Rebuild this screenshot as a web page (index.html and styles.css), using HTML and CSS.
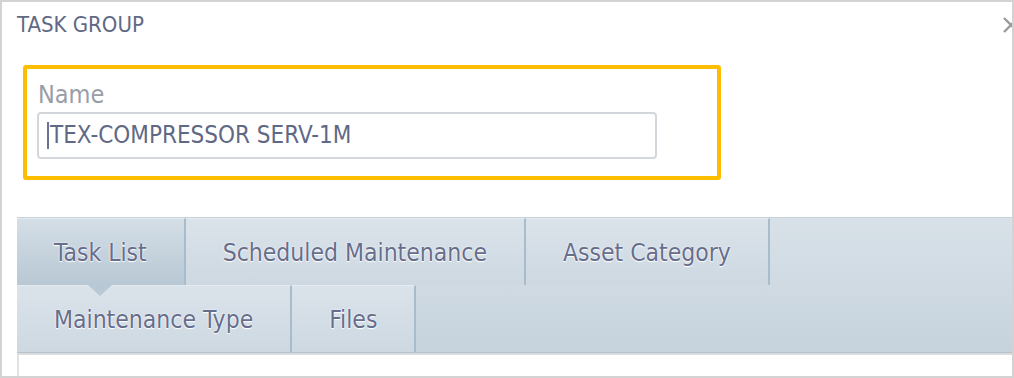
FILE: index.html
```html
<!DOCTYPE html>
<html lang="en">
<head>
    <meta charset="UTF-8">
    <title>Task Group</title>
    <link rel="stylesheet" href="styles.css">
</head>
<body>
    <div class="dialog">
        <div class="dialog-head">
            <h1>TASK GROUP</h1>
            <span class="close">
                <svg width="16" height="16" viewBox="0 0 16 16"><path d="M1 1 L15 15 M15 1 L1 15" stroke="#9b9b9b" stroke-width="2.4" fill="none"/></svg>
            </span>
        </div>

        <div class="name-box">
            <div class="label">Name</div>
            <div class="field"><span class="caret"></span>TEX-COMPRESSOR SERV-1M</div>
        </div>

        <div class="tabs">
            <div class="tab active">Task List</div>
            <div class="tab">Scheduled Maintenance</div>
            <div class="tab">Asset Category</div>
            <div class="tab">Maintenance Type</div>
            <div class="tab">Files</div>
        </div>
        <div class="tab-body"></div>
    </div>
</body>
</html>
```

FILE: styles.css
```css
html, body {
    margin: 0;
    padding: 0;
    background: #fff;
}
body {
    font-family: "DejaVu Sans Condensed", "DejaVu Sans", sans-serif;
}
.dialog {
    width: 1014px;
    height: 378px;
    box-sizing: border-box;
    border: 2px solid #d3d3d3;
    padding-left: 15px;
    overflow: hidden;
    display: flex;
    flex-direction: column;
}
.dialog-head {
    display: flex;
    justify-content: space-between;
    align-items: flex-start;
    padding-top: 10px;
}
h1 {
    margin: 0;
    font-size: 22px;
    line-height: 26px;
    font-weight: normal;
    color: #5f6984;
}
.close {
    display: block;
    width: 16px;
    height: 16px;
    margin-top: 5px;
    margin-right: -7px;
}
.close svg {
    display: block;
}
.name-box {
    margin: 27px 0 0 6px;
    padding: 12px 0 17px 10px;
    border: 4px solid #fdbd00;
    border-radius: 3px;
    width: 680px;
}
.label {
    font-size: 25px;
    line-height: 28px;
    color: #999ea6;
    padding-left: 1px;
}
.field {
    margin-top: 3px;
    width: 620px;
    height: 47px;
    box-sizing: border-box;
    border: 2px solid #d3d7dc;
    border-radius: 4px;
    padding-left: 8px;
    font-size: 24px;
    line-height: 43px;
    color: #5f6986;
    display: flex;
    align-items: center;
}
.caret {
    display: inline-block;
    width: 2px;
    height: 27px;
    background: #6a7390;
    margin-right: 1px;
}
.tabs {
    margin-top: 37px;
    display: flex;
    flex-wrap: wrap;
    background: linear-gradient(#d8e1e8, #c6d3dd);
    border-top: 1px solid #c7d2db;
    border-bottom: 1px solid #b3c3cf;
}
.tab {
    position: relative;
    height: 66px;
    line-height: 67px;
    padding: 0 37px;
    font-size: 24.5px;
    color: #676e8c;
    text-shadow: 0 0 2px #fff, 0 1px 1px #fff;
    background: linear-gradient(#dbe3ea, #cdd8e1);
    border-top: 1px solid #e4eaef;
    border-right: 2px solid #a9bccb;
}
.tab.active {
    background: linear-gradient(#d4dee6, #b8c8d4);
}
.tab.active::after {
    content: "";
    position: absolute;
    left: 50%;
    bottom: -11px;
    margin-left: -12px;
    border-left: 12px solid transparent;
    border-right: 12px solid transparent;
    border-top: 11px solid #b8c8d4;
    z-index: 2;
}
.tab-body {
    flex: 1;
    border-top: 2px solid #dcdcdc;
    border-left: 2px solid #e2e2e2;
}
```
